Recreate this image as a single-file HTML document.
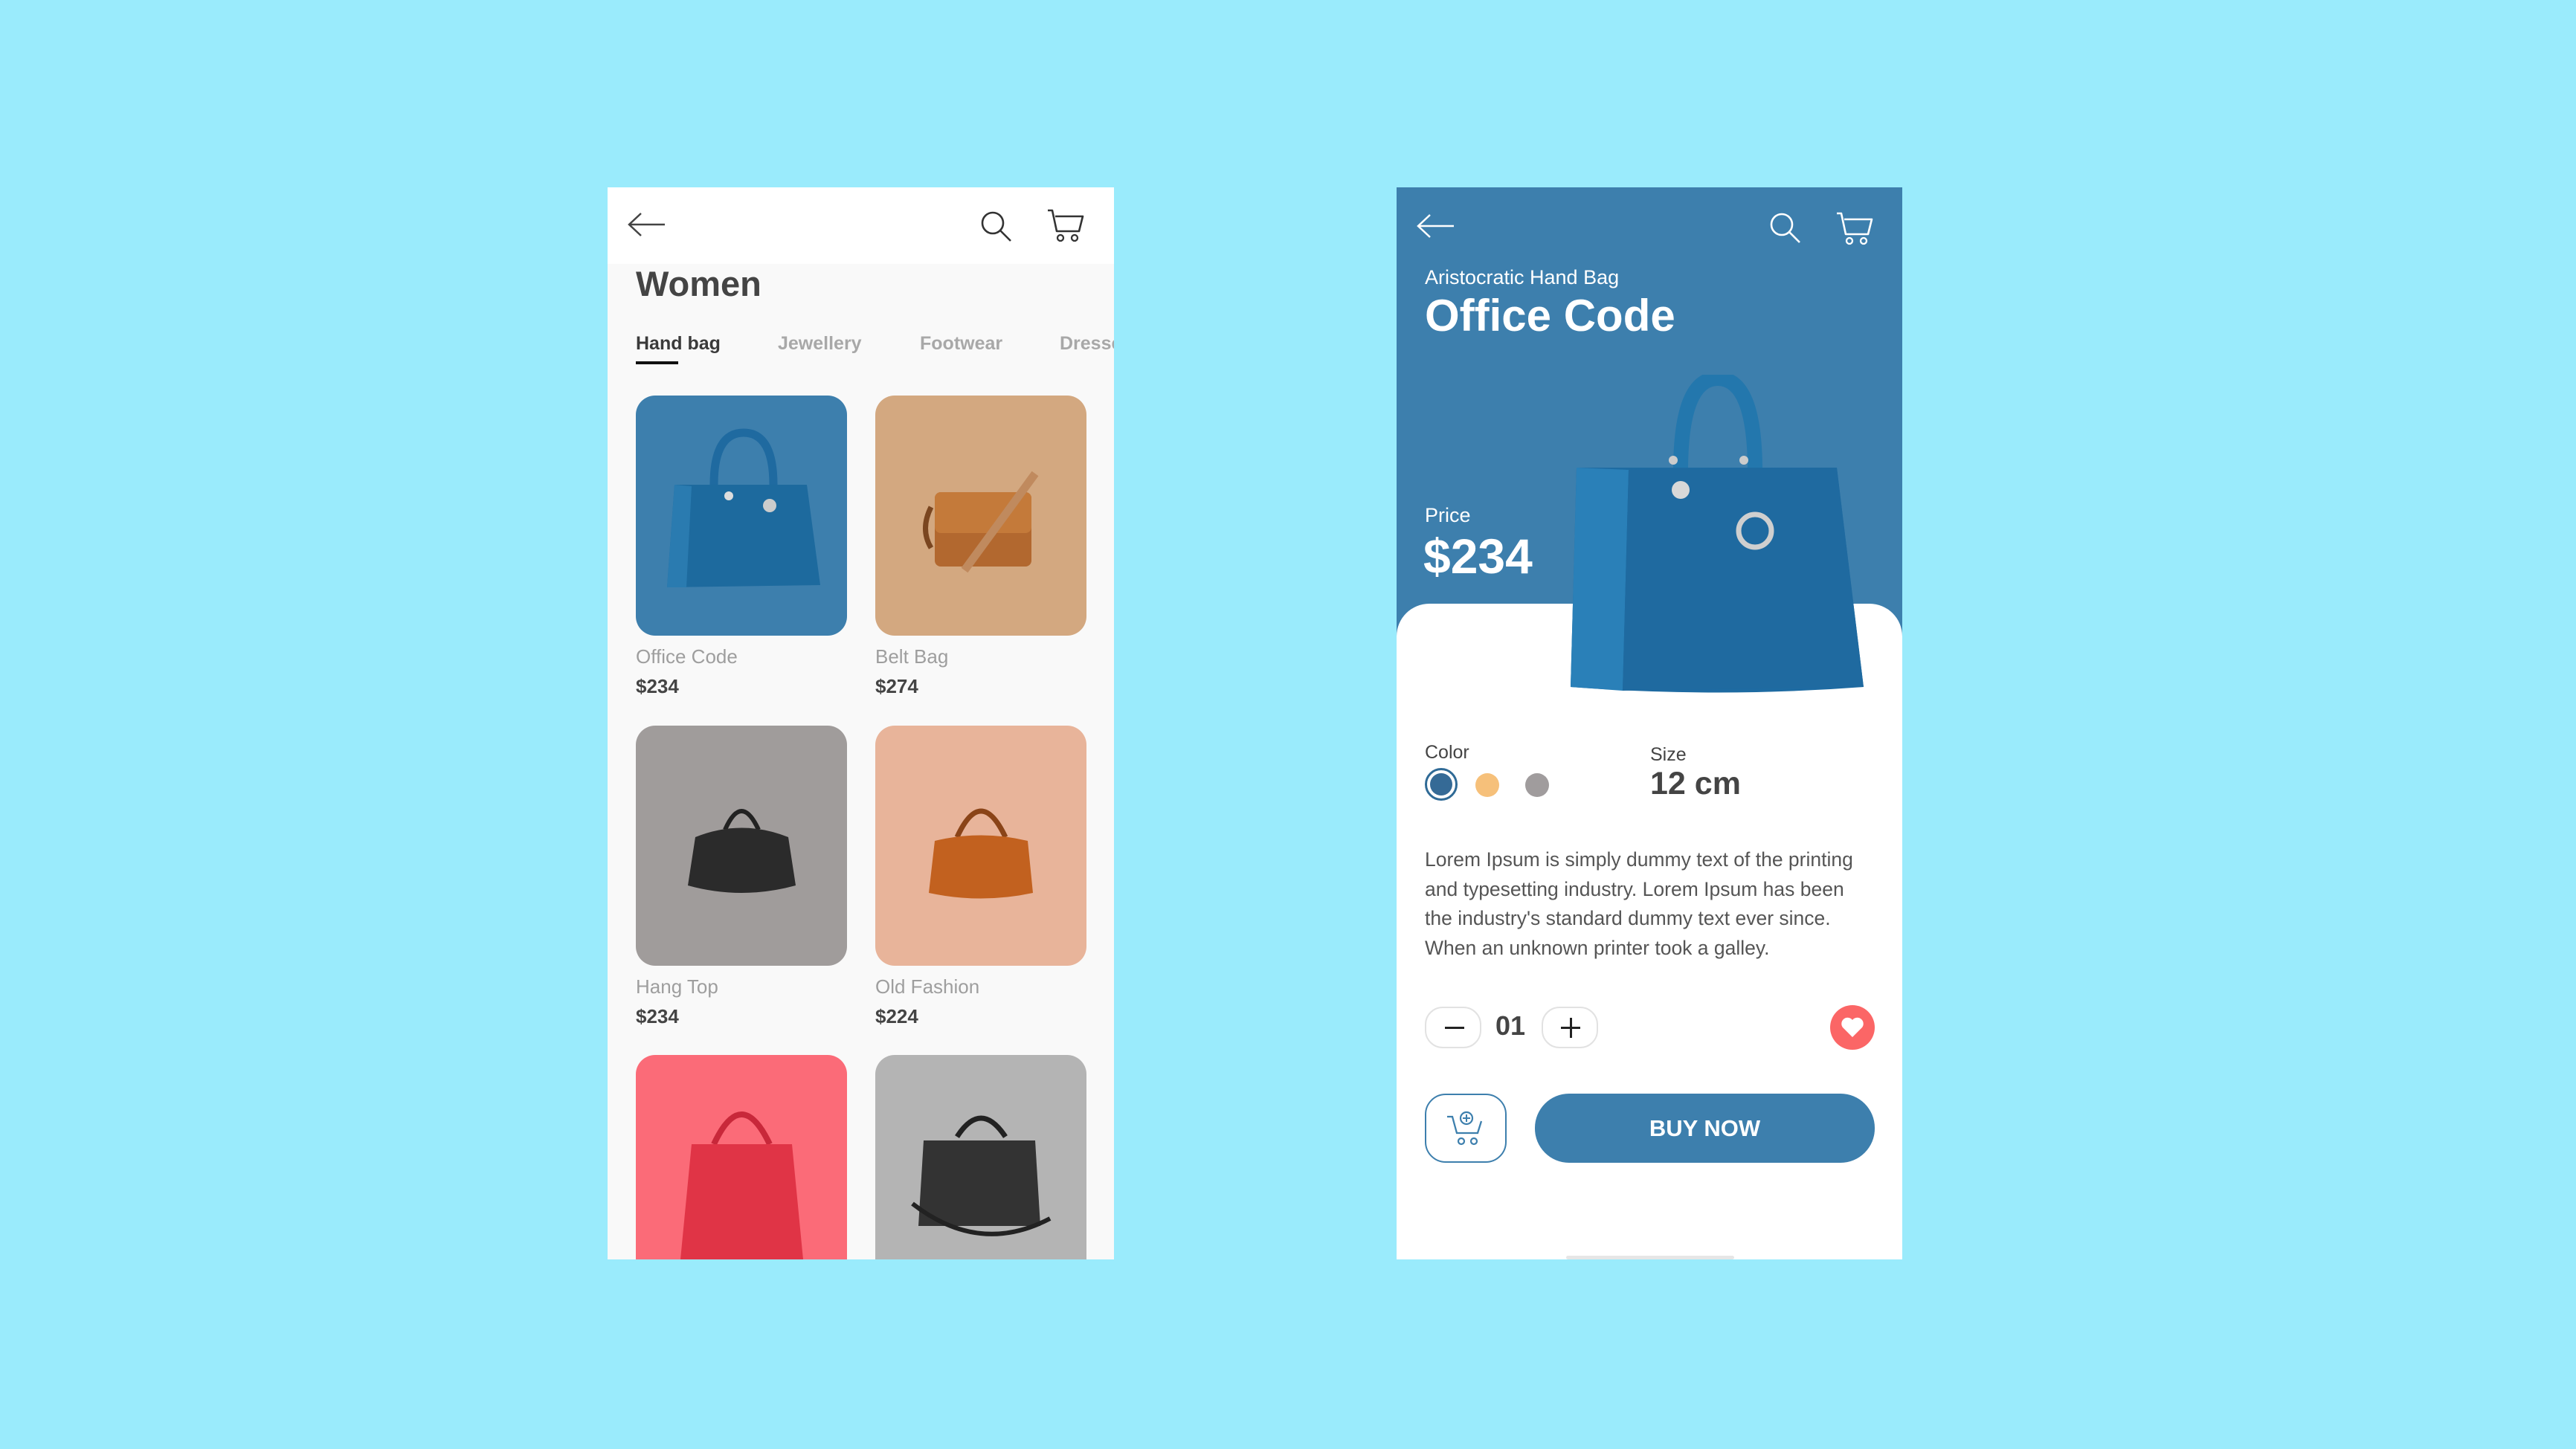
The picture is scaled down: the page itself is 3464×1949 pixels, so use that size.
<!DOCTYPE html>
<html><head><meta charset="utf-8"><style>
*{margin:0;padding:0;box-sizing:border-box}
body{width:3464px;height:1949px;background:#9aebfc;position:relative;overflow:hidden;font-family:"Liberation Sans",Arial,sans-serif}
.a{position:absolute}
.ph{position:absolute;overflow:hidden}
.card{position:absolute;width:284px;height:323px;border-radius:26px;overflow:hidden}
.nm{position:absolute;font-size:26px;color:#9e9e9e}
.pr{position:absolute;font-size:26px;font-weight:bold;color:#444}
.tab{position:absolute;top:448px;font-size:25px;font-weight:bold;color:#a8a8a8}
</style></head><body>

<!-- LEFT PHONE -->
<div class="ph" style="left:817px;top:252px;width:681px;height:1442px;background:#f9f9f9">
  <div class="a" style="left:0;top:0;width:681px;height:103px;background:#fff"></div>
  <svg class="a" style="left:25px;top:30px" width="56" height="40" viewBox="0 0 56 40"><path d="M52 20H4M20 5L4 20l16 15" stroke="#444" stroke-width="2.5" fill="none"/></svg>
  <svg class="a" style="left:500px;top:30px" width="46" height="46" viewBox="0 0 46 46"><circle cx="18" cy="18" r="14" stroke="#333" stroke-width="2.6" fill="none"/><path d="M28 28l14 14" stroke="#333" stroke-width="2.6"/></svg>
  <svg class="a" style="left:590px;top:28px" width="52" height="48" viewBox="0 0 52 48"><path d="M2 3h6l6 28h30l5-20H12" stroke="#333" stroke-width="2.6" fill="none" stroke-linejoin="round"/><circle cx="19" cy="40" r="4" stroke="#333" stroke-width="2.3" fill="none"/><circle cx="38" cy="40" r="4" stroke="#333" stroke-width="2.3" fill="none"/></svg>
</div>
<div class="a" style="left:855px;top:354px;font-size:47px;font-weight:bold;color:#444">Women</div>
<div class="tab" style="left:855px;color:#3a3a3a">Hand bag</div>
<div class="a" style="left:855px;top:486px;width:57px;height:4px;background:#111"></div>
<div class="tab" style="left:1046px">Jewellery</div>
<div class="tab" style="left:1237px">Footwear</div>
<div class="a" style="left:1425px;top:448px;width:73px;overflow:hidden;white-space:nowrap;font-size:25px;font-weight:bold;color:#a8a8a8">Dresses</div>

<!-- cards -->
<div class="card" style="left:855px;top:532px;background:#3d7fad">
 <svg width="284" height="323" viewBox="0 0 284 323"><path d="M105 120 Q105 50 145 50 Q185 50 185 120" stroke="#1f6aa0" stroke-width="11" fill="none"/><path d="M52 120 L230 120 L248 255 L42 258 Z" fill="#1d6a9e"/><path d="M52 120 L75 122 L68 258 L42 258Z" fill="#2a7bb0"/><circle cx="180" cy="148" r="9" fill="#ccc"/><circle cx="125" cy="135" r="6" fill="#ddd"/></svg>
</div>
<div class="card" style="left:1177px;top:532px;background:#d3a880">
 <svg width="284" height="323" viewBox="0 0 284 323"><path d="M75 150 Q60 180 75 205" stroke="#7a4620" stroke-width="7" fill="none"/><rect x="80" y="130" width="130" height="100" rx="8" fill="#b2682f"/><rect x="80" y="130" width="130" height="55" rx="8" fill="#c47a3a"/><path d="M120 235 L215 105" stroke="#c08a5e" stroke-width="11"/></svg>
</div>
<div class="nm" style="left:855px;top:868px">Office Code</div>
<div class="pr" style="left:855px;top:908px">$234</div>
<div class="nm" style="left:1177px;top:868px">Belt Bag</div>
<div class="pr" style="left:1177px;top:908px">$274</div>

<div class="card" style="left:855px;top:976px;background:#a09c9b">
 <svg width="284" height="323" viewBox="0 0 284 323"><path d="M120 140 Q142 90 165 140" stroke="#222" stroke-width="6" fill="none"/><path d="M80 150 Q142 125 205 150 L215 215 Q142 235 70 215Z" fill="#2b2b2b"/></svg>
</div>
<div class="card" style="left:1177px;top:976px;background:#e8b49a">
 <svg width="284" height="323" viewBox="0 0 284 323"><path d="M110 150 Q142 80 175 150" stroke="#8a4418" stroke-width="7" fill="none"/><path d="M80 155 Q142 140 205 155 L212 225 Q142 240 72 225Z" fill="#c2611f"/></svg>
</div>
<div class="nm" style="left:855px;top:1312px">Hang Top</div>
<div class="pr" style="left:855px;top:1352px">$234</div>
<div class="nm" style="left:1177px;top:1312px">Old Fashion</div>
<div class="pr" style="left:1177px;top:1352px">$224</div>

<div class="a" style="left:855px;top:1419px;width:284px;height:275px;border-radius:26px 26px 0 0;background:#fb6b78;overflow:hidden">
 <svg width="284" height="275" viewBox="0 0 284 275"><path d="M105 120 Q142 40 180 120" stroke="#c8283a" stroke-width="8" fill="none"/><path d="M75 120 L210 120 L225 275 L60 275Z" fill="#e03446"/></svg>
</div>
<div class="a" style="left:1177px;top:1419px;width:284px;height:275px;border-radius:26px 26px 0 0;background:#b4b4b4;overflow:hidden">
 <svg width="284" height="275" viewBox="0 0 284 275"><path d="M110 110 Q142 60 175 110" stroke="#222" stroke-width="7" fill="none"/><path d="M65 115 L215 115 L222 230 L58 230Z" fill="#333"/><path d="M50 200 Q140 270 235 220" stroke="#222" stroke-width="6" fill="none"/></svg>
</div>

<!-- RIGHT PHONE -->
<div class="ph" style="left:1878px;top:252px;width:680px;height:1442px;background:#3d7fad">
  <div class="a" style="left:0;top:560px;width:680px;height:900px;background:#fff;border-radius:44px 44px 0 0"></div>
  <svg class="a" style="left:25px;top:32px" width="56" height="40" viewBox="0 0 56 40"><path d="M52 20H4M20 5L4 20l16 15" stroke="#fff" stroke-width="2.5" fill="none"/></svg>
  <svg class="a" style="left:500px;top:32px" width="46" height="46" viewBox="0 0 46 46"><circle cx="18" cy="18" r="14" stroke="#fff" stroke-width="2.6" fill="none"/><path d="M28 28l14 14" stroke="#fff" stroke-width="2.6"/></svg>
  <svg class="a" style="left:590px;top:32px" width="52" height="48" viewBox="0 0 52 48"><path d="M2 3h6l6 28h30l5-20H12" stroke="#fff" stroke-width="2.6" fill="none" stroke-linejoin="round"/><circle cx="19" cy="40" r="4" stroke="#fff" stroke-width="2.3" fill="none"/><circle cx="38" cy="40" r="4" stroke="#fff" stroke-width="2.3" fill="none"/></svg>
  <div class="a" style="left:38px;top:106px;font-size:27px;color:#fff">Aristocratic Hand Bag</div>
  <div class="a" style="left:38px;top:138px;font-size:60px;font-weight:bold;color:#fff">Office Code</div>
  <div class="a" style="left:38px;top:426px;font-size:27px;color:#fff">Price</div>
  <div class="a" style="left:36px;top:458px;font-size:66px;font-weight:bold;color:#fff">$234</div>
  <svg class="a" style="left:232px;top:252px" width="410" height="440" viewBox="0 0 410 440">
    <path d="M150 130 Q150 5 200 5 Q250 5 250 130" stroke="#2377ad" stroke-width="20" fill="none"/>
    <path d="M10 125 L360 125 L396 420 Q200 435 2 420 Z" fill="#1e6ba2"/>
    <path d="M10 125 L80 128 L72 425 L2 420Z" fill="#2a80b8"/>
    <path d="M80 128 L360 125 L396 420 L72 425Z" fill="#1f6aa0"/>
    <circle cx="150" cy="155" r="12" fill="#d8d8d8"/>
    <circle cx="250" cy="210" r="22" fill="none" stroke="#cfcfcf" stroke-width="7"/>
    <circle cx="140" cy="115" r="6" fill="#ccc"/><circle cx="235" cy="115" r="6" fill="#ccc"/>
  </svg>
  <div class="a" style="left:38px;top:746px;font-size:25px;color:#444">Color</div>
  <div class="a" style="left:38px;top:781px;width:44px;height:44px;border-radius:50%;border:3px solid #2f6a96;padding:4px"><div style="width:100%;height:100%;border-radius:50%;background:#356a96"></div></div>
  <div class="a" style="left:106px;top:788px;width:32px;height:32px;border-radius:50%;background:#f6c07a"></div>
  <div class="a" style="left:173px;top:788px;width:32px;height:32px;border-radius:50%;background:#a09c9d"></div>
  <div class="a" style="left:341px;top:749px;font-size:25px;color:#444">Size</div>
  <div class="a" style="left:341px;top:778px;font-size:43px;font-weight:bold;color:#444">12 cm</div>
  <div class="a" style="left:38px;top:885px;width:600px;font-size:26.5px;line-height:39.5px;color:#555">Lorem Ipsum is simply dummy text of the printing and typesetting industry. Lorem Ipsum has been the industry's standard dummy text ever since. When an unknown printer took a galley.</div>
  <div class="a" style="left:38px;top:1102px;width:76px;height:56px;border:2px solid #e2e2e2;border-radius:24px"><div style="position:absolute;left:25px;top:25px;width:26px;height:3px;background:#222"></div></div>
  <div class="a" style="left:133px;top:1107px;font-size:36px;font-weight:bold;color:#444">01</div>
  <div class="a" style="left:195px;top:1102px;width:76px;height:56px;border:2px solid #e2e2e2;border-radius:24px"><div style="position:absolute;left:24px;top:25px;width:26px;height:3px;background:#222"></div><div style="position:absolute;left:35.5px;top:13px;width:3px;height:27px;background:#222"></div></div>
  <div class="a" style="left:583px;top:1100px;width:60px;height:60px;border-radius:50%;background:#fb6666"></div>
  <svg class="a" style="left:597px;top:1115px" width="32" height="30" viewBox="0 0 32 30"><path d="M16 28 L3 15 A7.5 7.5 0 0 1 16 5 A7.5 7.5 0 0 1 29 15 Z" fill="#fff"/></svg>
  <div class="a" style="left:38px;top:1219px;width:110px;height:93px;border:2px solid #3d7fad;border-radius:28px"></div>
  <svg class="a" style="left:66px;top:1242px" width="54" height="50" viewBox="0 0 54 50"><path d="M2 8h7l6 22h28l5-16" stroke="#3d7fad" stroke-width="2.3" fill="none"/><circle cx="21" cy="41" r="4" stroke="#3d7fad" stroke-width="2.2" fill="none"/><circle cx="38" cy="41" r="4" stroke="#3d7fad" stroke-width="2.2" fill="none"/><circle cx="28" cy="10" r="8" stroke="#3d7fad" stroke-width="2.2" fill="none"/><path d="M28 5v10M23 10h10" stroke="#3d7fad" stroke-width="2"/></svg>
  <div class="a" style="left:186px;top:1219px;width:457px;height:93px;border-radius:46px;background:#3d7fad;color:#fff;font-size:31px;font-weight:bold;text-align:center;line-height:93px">BUY NOW</div>
  <div class="a" style="left:228px;top:1437px;width:226px;height:5px;background:#e6e6e6;border-radius:3px"></div>
</div>
</body></html>
